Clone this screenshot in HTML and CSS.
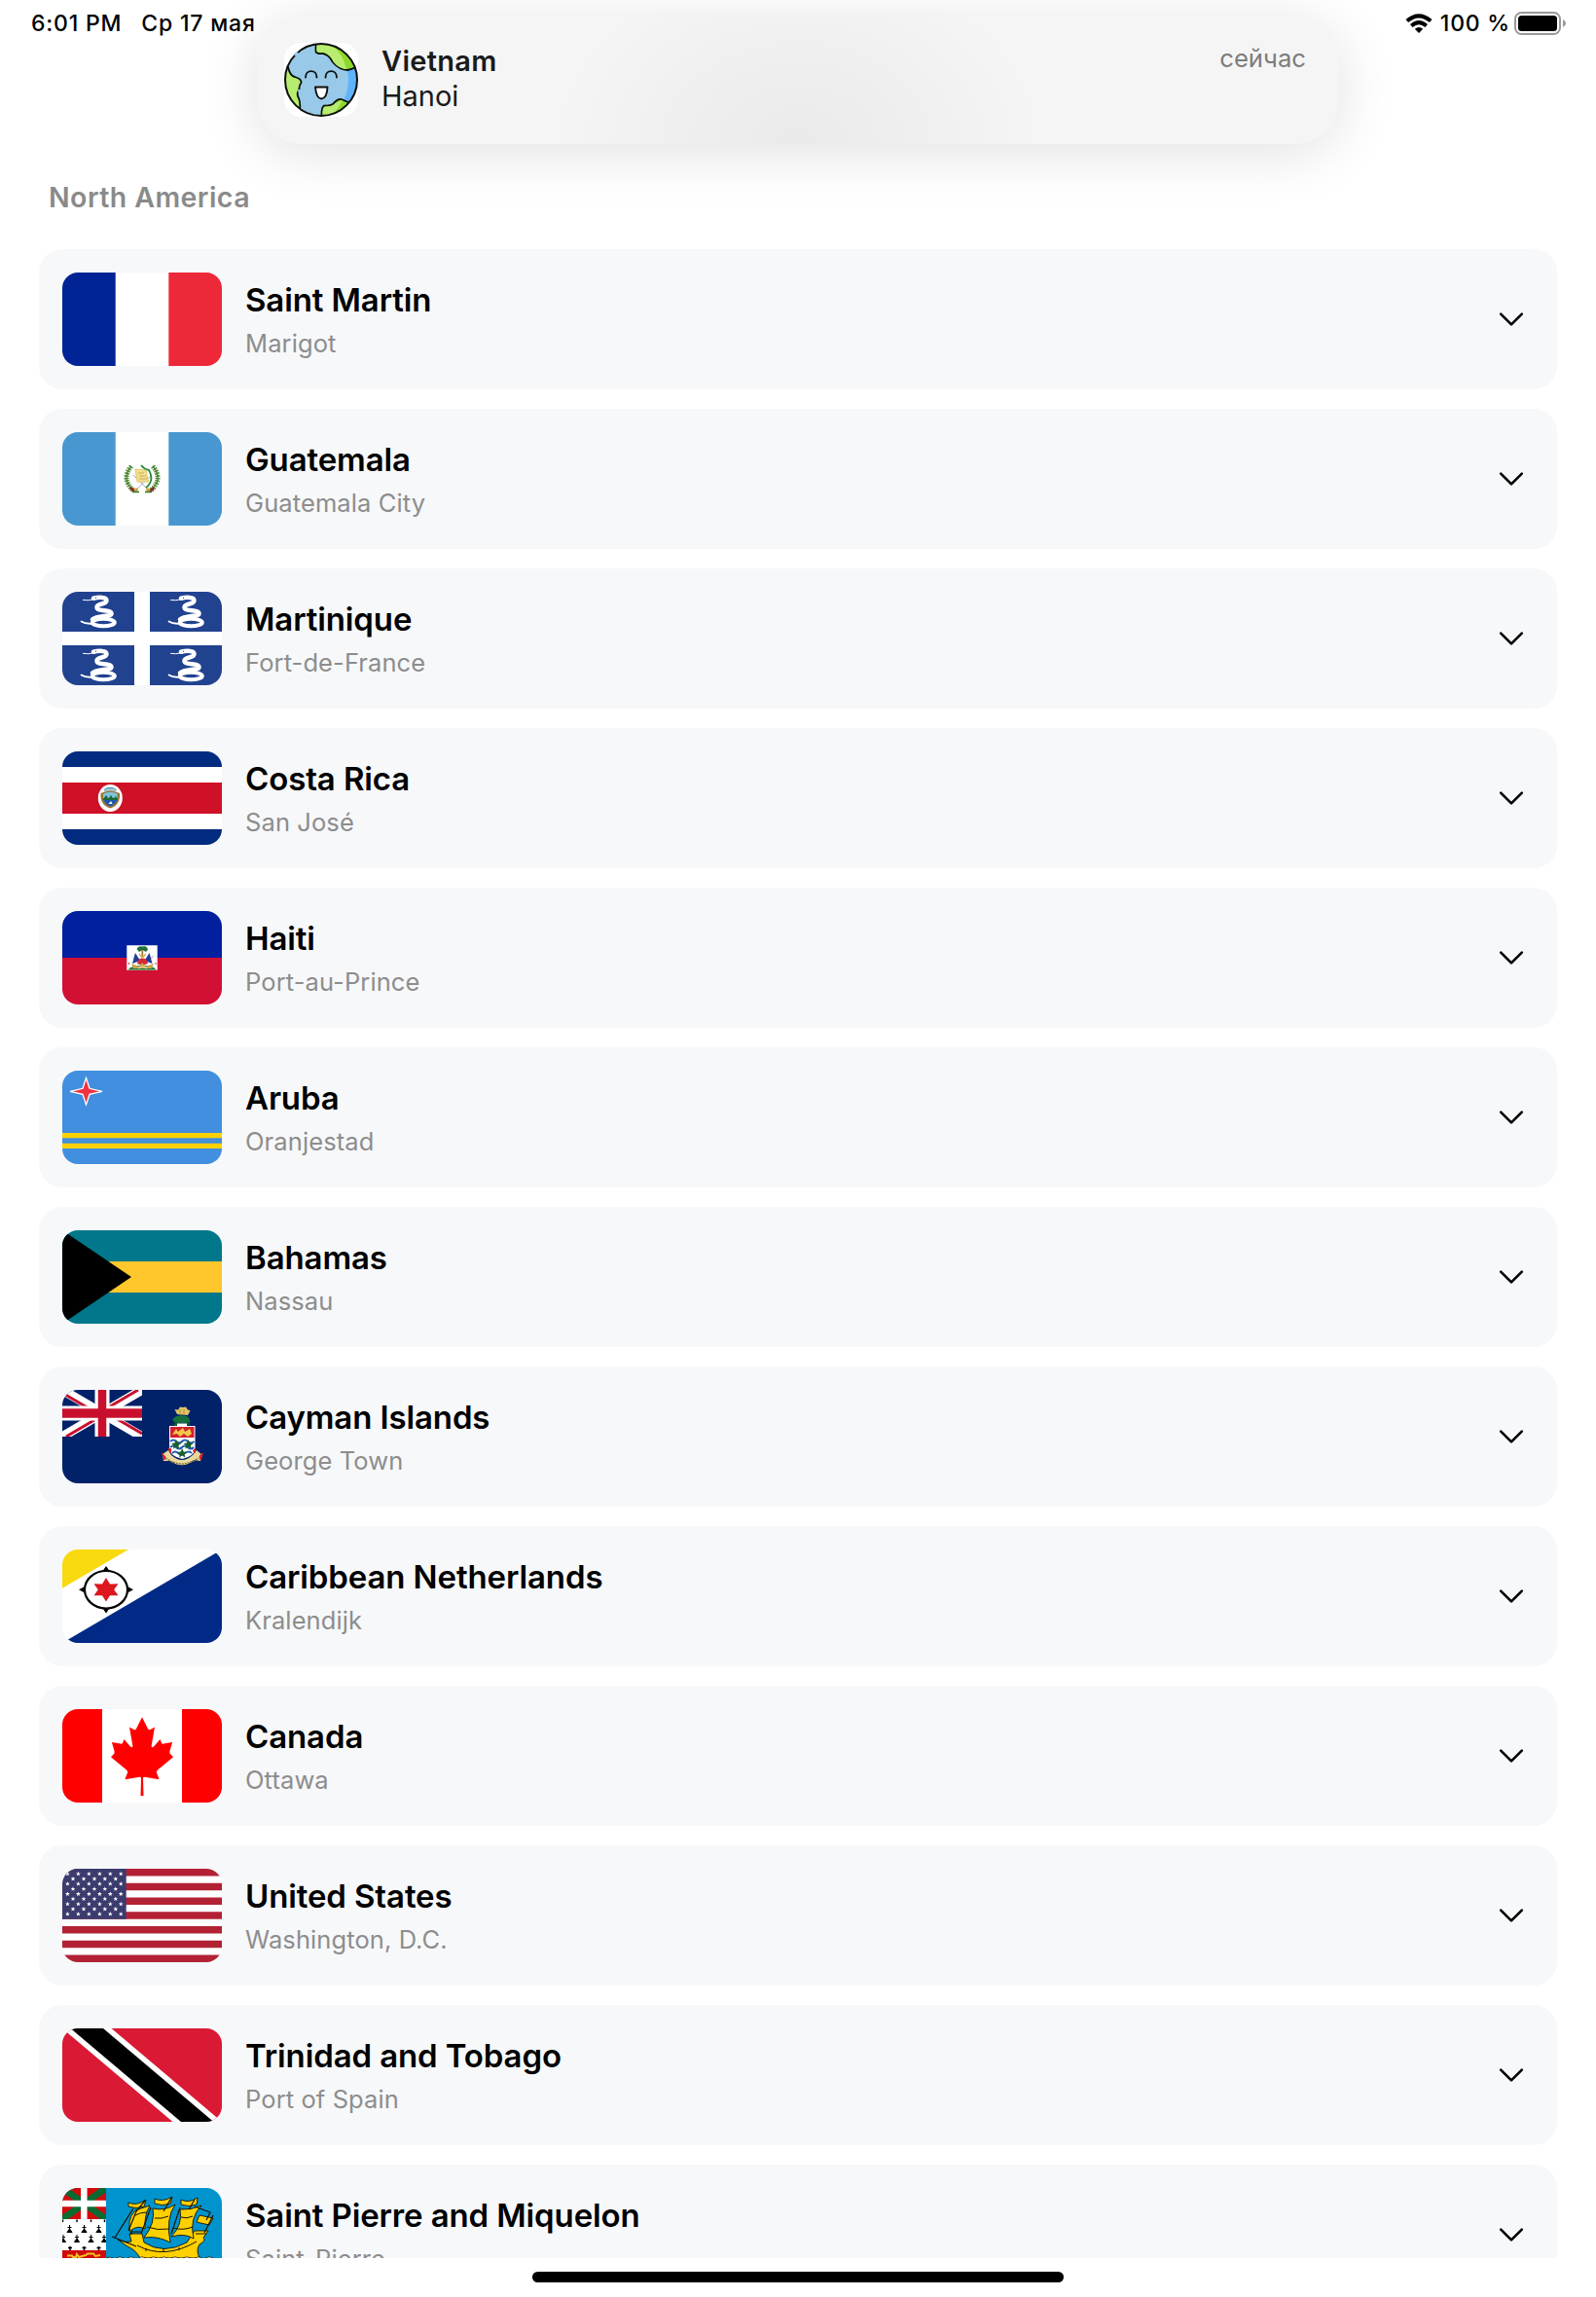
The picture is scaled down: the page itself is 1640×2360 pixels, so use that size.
FILE: index.html
```html
<!DOCTYPE html>
<html lang="ru">
<head>
<meta charset="utf-8">
<title>Countries</title>
<link rel="stylesheet" href="styles.css">
</head>
<body>
<svg class="defs" aria-hidden="true">
  <defs>
    <symbol id="chevron" viewBox="0 0 28 20"><path d="M3.2 4.6 14 15.400 24.800 4.600" fill="none" stroke="#000" stroke-width="2.600" stroke-linecap="round" stroke-linejoin="round"/></symbol>
    <path id="star" d="M0-2.500.6-.8 2.400-.8 1 .3 1.500 2 0 1-1.500 2-1 .3-2.400-.8-.6-.8Z" fill="#fff"/>
    <g id="row6"><use href="#star" x="5.400"/><use href="#star" x="16.400"/><use href="#star" x="27.400"/><use href="#star" x="38.400"/><use href="#star" x="49.300"/><use href="#star" x="60.200"/></g>
    <g id="row5"><use href="#star" x="11"/><use href="#star" x="22"/><use href="#star" x="33"/><use href="#star" x="43.800"/><use href="#star" x="54.800"/></g>
    <g id="snake" fill="none" stroke="#fff" stroke-linecap="round">
      <path stroke-width="1" d="M21.500 8.400Q27 9.400 31 8"/>
      <path stroke-width="4.500" d="M32 6.800C37 5.500 45.500 5 45.500 9C45.500 13.500 35.500 11.500 35.500 16C35.500 21 50.500 17.500 50.500 22.500C50.500 26 36 24 31 28.500"/>
      <ellipse cx="42.300" cy="31.500" rx="11.500" ry="3.800" stroke-width="4"/>
      <path stroke-width="1.800" d="M32 32.500Q24 33.500 19.500 30.500"/>
      <circle cx="34.500" cy="6.200" r=".6" fill="#21428f" stroke="none"/>
    </g>
    <path id="ermine" d="M0-4V3M-2-1.500H2M-2.600 3.500 0 0 2.600 3.500Z" fill="#000" stroke="#000" stroke-width="1"/>
  </defs>
</svg>

<div class="screen">
  <header class="status">
    <div class="status-left"><span class="time">6:01 PM</span><span class="date">Ср 17 мая</span></div>
    <div class="status-right">
      <svg class="wifi" viewBox="0 0 28 20"><g fill="none" stroke="#000" stroke-width="4"><path d="M1.800 7.600Q14-3 26.200 7.600"/><path d="M6.300 12.400Q14 5.800 21.700 12.400"/></g><path d="M9.800 15.800Q14 12.300 18.200 15.800L14 20Z"/></svg>
      <span class="percent">100 %</span>
      <svg class="battery" viewBox="0 0 54 24"><rect x="1" y="1" width="46" height="22" rx="6.500" fill="none" stroke="#999" stroke-width="2"/><rect x="4" y="4" width="40" height="16" rx="3.500"/><path d="M50 8Q53 9.500 53 12T50 16Z" fill="#999"/></svg>
    </div>
  </header>

  <h1 class="region">North America</h1>

  <main class="list">
    <article class="card">
      <svg class="flag" viewBox="0 0 164 96"><path fill="#fff" d="M0 0H164V96H0Z"/><path fill="#002395" d="M0 0H54.700V96H0Z"/><path fill="#ed2939" d="M109.300 0H164V96H109.300Z"/></svg>
      <div class="info"><h2>Saint Martin</h2><p>Marigot</p></div><svg class="chevron"><use href="#chevron"/></svg>
    </article>

    <article class="card">
      <svg class="flag" viewBox="0 0 164 96"><path fill="#fff" d="M0 0H164V96H0Z"/><path fill="#4997d0" d="M0 0H54.700V96H0ZM109.300 0H164V96H109.300Z"/>
        <g fill="none" stroke="#5c9440" stroke-width="5" stroke-dasharray="1.600 1"><path d="M71 35Q60 48 73 60"/><path d="M93 35Q104 48 91 60"/></g>
        <path d="M71 35Q60 48 73 60M93 35Q104 48 91 60" fill="none" stroke="#3f7a30" stroke-width="1.200"/>
        <path d="M74 61 92 44M90 61 73 44" stroke="#aab" stroke-width="1"/>
        <path d="M75 38 86 39 88.500 51 77 51Z" fill="#f3e08c" stroke="#d9bd5c" stroke-width=".8"/><path d="M78 42H84M79 45H86M79 48H87" stroke="#b99b4c" stroke-width=".7"/>
        <path d="M81 34Q84 38 89 39Q95 50 86 57" fill="none" stroke="#2b8a38" stroke-width="1.800"/>
        <path d="M70 57 74 61M94 57 90 61" stroke="#8a2f24" stroke-width="3"/><path d="M76 57.500V61.500M88 57.500V61.500" stroke="#c9a63c" stroke-width="3.500"/><path d="M72 61.500H79M85 61.500H92" stroke="#3f7a30" stroke-width="1.500"/></svg>
      <div class="info"><h2>Guatemala</h2><p>Guatemala City</p></div><svg class="chevron"><use href="#chevron"/></svg>
    </article>

    <article class="card">
      <svg class="flag" viewBox="0 0 164 96"><path fill="#fff" d="M0 0H164V96H0Z"/><path fill="#21428f" d="M0 0H74V41H0ZM90 0H164V41H90ZM0 55H74V96H0ZM90 55H164V96H90Z"/><use href="#snake"/><use href="#snake" x="90"/><use href="#snake" y="55"/><use href="#snake" x="90" y="55"/></svg>
      <div class="info"><h2>Martinique</h2><p>Fort-de-France</p></div><svg class="chevron"><use href="#chevron"/></svg>
    </article>

    <article class="card">
      <svg class="flag" viewBox="0 0 164 96"><path fill="#fff" d="M0 0H164V96H0Z"/><path fill="#002b7f" d="M0 0H164V16H0ZM0 80H164V96H0Z"/><path fill="#ce1126" d="M0 32H164V64H0Z"/>
        <ellipse cx="49.300" cy="48" rx="12.500" ry="14" fill="#fff"/><path d="M42 41Q49 34 56.500 41Z" fill="#9cc9d4"/><path d="M39.500 43Q49 38 59 43Q60 55 49.300 58.500Q38.500 55 39.500 43Z" fill="#9a7432"/><path d="M42 43.500Q49 40 56.500 43.500V48H42Z" fill="#7cc4dc"/><path d="M42 48H57Q56 54 49.300 56.500Q43 54 42 48Z" fill="#1b58b5"/><path d="M41.500 50 45 45 47.500 48.500 50 45 52.500 48.500 55 46 57 50Z" fill="#1c6a32"/><path d="M47.500 54H51.500L50 51Z" fill="#fff"/><path d="M43 39.500Q49 35 55.500 39.500" fill="none" stroke="#477b93"/></svg>
      <div class="info"><h2>Costa Rica</h2><p>San José</p></div><svg class="chevron"><use href="#chevron"/></svg>
    </article>

    <article class="card">
      <svg class="flag" viewBox="0 0 164 96"><path fill="#00209f" d="M0 0H164V48H0Z"/><path fill="#d21034" d="M0 48H164V96H0Z"/><path fill="#fff" d="M66.300 35.300H97.700V60.700H66.300Z"/>
        <path d="M67.500 60.500Q70 56 82 56T96.500 60.500Z" fill="#227a36"/><path d="M76.500 39Q78 35.500 82 36.500Q87 35 88 39.500L86 42 82.500 40 79 42Z" fill="#21713b"/><path d="M82.300 40V56" stroke="#a57d36" stroke-width="1.800"/>
        <path d="M72 54 75 43 80 51ZM92.500 54 89.500 43 84.500 51ZM73 48 70.500 45 76 51ZM92 48 94.500 45 88 51Z" fill="#213c92"/><path d="M77 54Q78 48 82.300 49Q87 48 88 54L82.300 56Z" fill="#d22c38"/><path d="M71 54 79 57 82 53 86 57 94 54 92 59H73Z" fill="#c7a64a"/><path d="M78 59 82.300 57 87 59" fill="none" stroke="#e8e8d0" stroke-width="1"/><path d="M79 44 82.300 48 86 44" fill="none" stroke="#d8b064" stroke-width="1.500"/><path d="M68.500 53V55M96 53V55" stroke="#d22c38"/></svg>
      <div class="info"><h2>Haiti</h2><p>Port-au-Prince</p></div><svg class="chevron"><use href="#chevron"/></svg>
    </article>

    <article class="card">
      <svg class="flag" viewBox="0 0 164 96"><path fill="#418fde" d="M0 0H164V96H0Z"/><path fill="#ffd100" d="M0 64H164V69.300H0ZM0 74.700H164V80H0Z"/><path d="M24.500 7.500 28 18.300 41 21.300 28 24.300 24.500 35 21 24.300 8 21.300 21 18.300Z" fill="#ef3340" stroke="#fff" stroke-width="1.300"/></svg>
      <div class="info"><h2>Aruba</h2><p>Oranjestad</p></div><svg class="chevron"><use href="#chevron"/></svg>
    </article>

    <article class="card">
      <svg class="flag" viewBox="0 0 164 96"><path fill="#00778b" d="M0 0H164V96H0Z"/><path fill="#ffc72c" d="M0 32H164V64H0Z"/><path d="M0 0 71 48 0 96Z"/></svg>
      <div class="info"><h2>Bahamas</h2><p>Nassau</p></div><svg class="chevron"><use href="#chevron"/></svg>
    </article>

    <article class="card">
      <svg class="flag" viewBox="0 0 164 96"><path fill="#012169" d="M0 0H164V96H0Z"/>
        <svg width="82" height="48" viewBox="0 0 82 48"><path d="M0 0 82 48M82 0 0 48" stroke="#fff" stroke-width="9.500"/><path d="M0 3 34 23M82 45 48 25M78 0 44 20M4 48 38 28" stroke="#c8102e" stroke-width="3"/><path d="M41 0V48M0 24H82" stroke="#fff" stroke-width="15"/><path d="M41 0V48" stroke="#c8102e" stroke-width="8.500"/><path d="M0 24H82" stroke="#c8102e" stroke-width="9.500"/></svg>
        <path d="M118 25 115.500 20 119 20.500 121 17.500 124 18 127 17.500 128.500 20 131.500 21.500 129 26Z" fill="#dfc46b"/><path d="M121 26V20M125 26V20" stroke="#b08c34"/>
        <path d="M113 31Q116 25 126 26.500Q132 28 131 33L127 34H117Z" fill="#14713b"/><path d="M115 33H119V37H115ZM127 33H131V36H127Z" fill="#0d5a2e"/><path d="M118 34.500H128V37H118Z" fill="#fff"/>
        <path d="M110 37H136.500V60Q136 68 123.200 71Q110.500 68 110 60Z" fill="#fff"/><path d="M111 38H135.500V49H111Z" fill="#d4212e"/><path d="M113 46 117 40 119 43 124 39 126 43 131 40 133 45 129 48 125 45 121 48 118 45Z" fill="#f0c649"/>
        <path d="M111 53Q114 50 117 53T123 53T129 53T135.500 53M111 59Q114 56 117 59T123 59T129 59T135 59M113 65Q116 62 119 65T126 65T133 65" fill="none" stroke="#225aa8" stroke-width="2"/>
        <g fill="#17602c"><path d="M117 51 118.500 54.500 122 55 119.500 57 120 60.500 117 58.500 114 60.500 114.500 57 112 55 115.500 54.500ZM129.500 51 131 54.500 134.500 55 132 57 132.500 60.500 129.500 58.500 126.500 60.500 127 57 124.500 55 128 54.500ZM123.200 60 124.700 63.500 128 64 125.700 66 126.200 69.500 123.200 67.500 120.200 69.500 120.700 66 118 64 121.700 63.500Z"/></g>
        <path d="M103 66 109 62 112 67Q123 77 134 67L138 62 144 67 142 73 135 72Q124 82 111 73L104 73Z" fill="#ead99a"/><path d="M106 70Q123 82 140 70" fill="none" stroke="#897a43" stroke-width="1.500" stroke-dasharray="2 1"/><path d="M102.500 65 106 69 105 72ZM109 60 112 61 111 65ZM137 60 134.500 62 136 65ZM144.500 65 141 68 142 72Z" fill="#d4212e" stroke="#d4212e"/></svg>
      <div class="info"><h2>Cayman Islands</h2><p>George Town</p></div><svg class="chevron"><use href="#chevron"/></svg>
    </article>

    <article class="card">
      <svg class="flag" viewBox="0 0 164 96"><path fill="#fff" d="M0 0H164V96H0Z"/><path fill="#f9d90f" d="M0 0H68L0 39.700Z"/><path fill="#012a87" d="M164 0V96H0Z"/><ellipse cx="45" cy="41.300" rx="22" ry="19.300" fill="none" stroke="#000" stroke-width="2.200"/><path d="M45 17 48.500 22H41.500ZM45 65.500 48.500 60.500H41.500ZM17 41.300 23 38V44.500ZM73 41.300 67 38V44.500Z"/><path fill="#dc171d" d="M45 29 49 35.500 57.500 35.300 53.200 41.300 57.500 47.300 49 47.300 45 53.500 41 47.300 32.500 47.300 36.800 41.300 32.500 35.300 41 35.500Z"/></svg>
      <div class="info"><h2>Caribbean Netherlands</h2><p>Kralendijk</p></div><svg class="chevron"><use href="#chevron"/></svg>
    </article>

    <article class="card">
      <svg class="flag" viewBox="0 0 164 96"><path fill="#fff" d="M0 0H164V96H0Z"/><path fill="#f00" d="M0 0H41V96H0ZM123 0H164V96H123ZM82 8.300 75.800 20.500Q75 21.800 73.500 21L69 18.500 72.300 37.500Q72.500 40.500 70 38.500L63.500 31 62 34.800Q61.500 36 60 35.500L50.900 34 53.500 43Q54 45.500 52.500 46.500L50 49.300 66 62.500Q67.500 64 67 65.500L64.300 72.300 79.500 69.700Q81 69.600 81 71L80.500 89H83.500L83 71Q83 69.600 84.500 69.700L99.700 72.300 97 65.500Q96.500 64 98 62.500L114 49.300 111.500 46.500Q110 45.500 110.500 43L113.100 34 104 35.500Q102.500 36 102 34.800L100.500 31 94 38.500Q91.500 40.500 91.700 37.500L95 18.500 90.500 21Q89 21.800 88.200 20.500Z"/></svg>
      <div class="info"><h2>Canada</h2><p>Ottawa</p></div><svg class="chevron"><use href="#chevron"/></svg>
    </article>

    <article class="card">
      <svg class="flag" viewBox="0 0 164 96"><path fill="#fff" d="M0 0H164V96H0Z"/><path stroke="#b22234" stroke-width="7.385" d="M0 3.690H164M0 18.460H164M0 33.230H164M0 48H164M0 62.770H164M0 77.540H164M0 92.310H164"/><path fill="#3c3b6e" d="M0 0H65.700V51.700H0Z"/><use href="#row6" y="5.200"/><use href="#row5" y="10.400"/><use href="#row6" y="15.500"/><use href="#row5" y="20.700"/><use href="#row6" y="25.900"/><use href="#row5" y="31"/><use href="#row6" y="36.200"/><use href="#row5" y="41.400"/><use href="#row6" y="46.500"/></svg>
      <div class="info"><h2>United States</h2><p>Washington, D.C.</p></div><svg class="chevron"><use href="#chevron"/></svg>
    </article>

    <article class="card">
      <svg class="flag" viewBox="0 0 164 96"><path fill="#da1a35" d="M0 0H164V96H0Z"/><path fill="#fff" d="M0 0H50.500L164 96H113.500Z"/><path d="M8.500 0H42L155.500 96H122Z"/></svg>
      <div class="info"><h2>Trinidad and Tobago</h2><p>Port of Spain</p></div><svg class="chevron"><use href="#chevron"/></svg>
    </article>

    <article class="card">
      <svg class="flag" viewBox="0 0 164 96"><path fill="#0093cc" d="M0 0H164V96H0Z"/><path fill="#fff" d="M0 32H45V64H0Z"/><path fill="#d00a0a" d="M0 0H45V32H0ZM0 64H45V96H0Z"/><path d="M0 0 45 32M45 0 0 32" stroke="#0a6b31" stroke-width="7"/><path d="M45 0H60V32H45Z" fill="#0093cc"/><path d="M22.300 0V32M0 16H45" stroke="#fff" stroke-width="6.500"/>
        <path d="M0 32H45V36H0Z" fill="#fff"/>
        <use href="#ermine" x="7.500" y="42"/><use href="#ermine" x="22.500" y="42"/><use href="#ermine" x="37.500" y="42"/><use href="#ermine" x="1" y="52"/><use href="#ermine" x="15" y="52"/><use href="#ermine" x="29.500" y="52"/><use href="#ermine" x="43" y="52"/><path d="M6 61.500H10M8 60V64M20.500 61.500H24.500M22.500 60V64M35.500 61.500H39.500M37.500 60V64M.5 32.500V35M15 32.500V35M29.500 32.500V35M43.500 32.500V35" stroke="#000" stroke-width="1.500"/>
        <path d="M5 69.500H10L11 71H14L15 68 17 71 24 69 26 67.500H32L34 70 39 69" stroke="#f2c01e" stroke-width="2" fill="none"/>
        <path fill="#0093cc" d="M45 32H60V64H45Z"/>
        <g stroke="#171300" stroke-width=".9" stroke-linejoin="round" fill="#ffd000">
          <path d="M57 53Q65 57 71 55L69 47H82L84 56Q104 69 128 56L136 44H150L145 51Q148 54 141 58Q137 64 141 72H80Q75 63 67 60Z"/>
          <path d="M71 48Q65 34 75 23L90 18Q84 28 85 42Q78 38 71 43ZM93 21Q105 24 116 17Q106 31 111 56Q98 49 84 51Q96 36 93 21ZM121 22Q132 23 143 18Q130 31 135 52Q126 46 112 50Q124 38 121 22Z"/>
          <path d="M68 15Q76 19 86 12L84 19Q76 22 68 19ZM95 11Q103 15 113 9L111 16Q103 19 95 16ZM122 12Q130 16 139 10L138 17Q130 20 122 17ZM141 28 155 31 151 38 138 35Z"/>
          <path d="M51 50 76 60M54 51 73 21M85 13 76 24 68 44M112 10 104 24M136 12 130 22M136 19 152 25 148 33M155 28 146 46M91 20 81 47M121 20 112 47" fill="none" stroke-width="1.200"/>
        </g>
        <path d="M70 45H81M137 47H148M87 40Q98 44 110 42M114 41Q124 44 134 40M75 28Q80 25 87 25M95 31Q102 32 109 29M122 30Q128 32 134 29M77 59Q105 74 138 55M86 62V65M104 62V66M120 61V64" stroke="#171300" stroke-width="1" fill="none"/>
        <path d="M45 75Q49 70 54 76Q59 69 65 76Q71 69 76 76Q82 69 88 76Q94 69 99 76Q105 69 110 76Q116 69 122 76Q128 69 134 76Q140 69 145 76Q151 69 157 76L164 74V82H45Z" fill="#0093cc" stroke="#171300" stroke-width="4"/><path d="M45 75Q49 70 54 76Q59 69 65 76Q71 69 76 76Q82 69 88 76Q94 69 99 76Q105 69 110 76Q116 69 122 76Q128 69 134 76Q140 69 145 76Q151 69 157 76L164 74V82H45Z" fill="#0093cc" stroke="#fff" stroke-width="2.400"/></svg>
      <div class="info"><h2>Saint Pierre and Miquelon</h2><p>Saint-Pierre</p></div><svg class="chevron"><use href="#chevron"/></svg>
    </article>
  </main>

  <footer class="home"><div class="home-bar"></div></footer>

  <aside class="banner">
    <svg class="app-icon" viewBox="0 0 76 76"><defs><clipPath id="globe"><circle cx="38" cy="38" r="37"/></clipPath></defs><rect width="76" height="76" rx="17" fill="#fff"/>
      <g clip-path="url(#globe)"><path fill="#98c9e9" d="M0 0H76V76H0Z"/><path fill="#5eb3fb" d="M57 8Q75 38 57 68L80 80V0Z"/>
        <g stroke="#0c0f0c" stroke-width="1.800"><path fill="#8ed72c" d="M32.500 0V9Q33 11.500 40 11Q46 12 50 20Q57 28 65 28Q70 27 76 24V0Z"/><path fill="#b8ec70" d="M0 20 4 25Q6 34 11 35Q18 37 17.500 41Q15 44 15.500 48Q12 52 15 57Q17 62 16 69L0 76Z"/><path fill="#8ed72c" d="M38.500 76Q38 66 41 64.500Q47 65 50 63Q55 57 59 58L68 62V76Z"/></g>
        <path fill="#b8ec70" d="M33.500 1.500V8.500Q35 10.500 41 10Q47 12 51 20Q57 27 64 27Q61 13 51 4Q44 1 33.500 1.500ZM39.500 75Q39 67 42 65.500Q49 66 53 62L60 59Q57 66 51 72Z"/></g>
      <circle cx="38" cy="38" r="37" fill="none" stroke="#0c0f0c" stroke-width="2"/><path d="M11 13 14 10" stroke="#98c9e9" stroke-width="3"/><path d="M15.500 48V51" stroke="#98c9e9" stroke-width="2.500"/>
      <path d="M22 35.500C22 27 33.500 27 33.500 35.500M42.500 35.500C42.500 27 54 27 54 35.500" fill="none" stroke="#0c0f0c" stroke-width="1.900" stroke-linecap="round"/><path d="M32 45.500H44.500Q44 57 38.200 57.500Q33 57 32 45.500Z" fill="#fff" stroke="#0c0f0c" stroke-width="1.900" stroke-linejoin="round"/></svg>
    <div class="banner-text"><strong>Vietnam</strong><span>Hanoi</span></div>
    <time>сейчас</time>
  </aside>
</div>
</body>
</html>
```
FILE: styles.css
```css
* { box-sizing: border-box; }
body { margin: 0; background: #fff; color: #000; font-family: Inter, "Liberation Sans", sans-serif; }
h1, h2, p { margin: 0; }
.defs { position: absolute; width: 0; height: 0; }

.screen { position: relative; display: flex; flex-direction: column; width: 1640px; height: 2360px; overflow: hidden; }

.status { display: flex; justify-content: space-between; height: 48px; padding: 0 30px 0 32px; font-size: 23px; font-weight: 500; line-height: 48px; }
.status-left, .status-right { display: flex; }
.status-left { gap: 20px; letter-spacing: 0.8px; }
.status-right { align-items: center; }
.time, .date { white-space: nowrap; }
.wifi { width: 28px; height: 20px; margin-right: 8px; }
.percent { margin-right: 4px; white-space: nowrap; letter-spacing: 0.800px; }
.battery { width: 54px; height: 24px; }

.region { height: 208px; padding: 136px 0 0 50px; color: #8a8a8a; font-size: 28.500px; font-weight: 600; line-height: 38px; letter-spacing: 0.450px; }

.list { display: flex; flex: 1; flex-direction: column; gap: 20px; min-height: 0; padding: 0 40px; overflow: hidden; }
.card { display: flex; flex: none; align-items: center; height: 144px; padding: 0 33px 0 24px; border-radius: 24px; background: #f7f8fa; }
.flag { flex: none; width: 164px; height: 96px; border-radius: 16px; }
.info { flex: 1; padding-left: 24px; }
.info h2 { font-size: 33px; font-weight: 600; line-height: 42px; letter-spacing: -0.120px; }
.info p { margin-top: 7px; color: #8d8d8d; font-size: 25.500px; line-height: 34px; letter-spacing: 0.100px; }
.chevron { width: 28px; height: 20px; }

.home { display: flex; flex: none; justify-content: center; height: 40px; padding-top: 14px; }
.home-bar { width: 546px; height: 11px; border-radius: 6px; background: #000; }

.banner { position: absolute; top: 16px; left: 264px; display: flex; width: 1112px; height: 132px; padding: 28px 34px 0 28px; border-radius: 46px; background: radial-gradient(ellipse 250px 190px at 50% 100%, #eaeaea, #eeeeee 40%, #f5f5f5) #f5f5f5; box-shadow: 0 8px 60px rgba(0, 0, 0, 0.12); color: #1a1a1a; }
.app-icon { flex: none; width: 76px; height: 76px; }
.banner-text { display: flex; flex: 1; flex-direction: column; padding: 1px 0 0 24px; font-size: 29px; line-height: 36px; }
.banner-text strong { font-weight: 600; letter-spacing: 0.300px; }
.banner time { color: #7c7c7c; font-size: 25.700px; line-height: 32px; }
```
